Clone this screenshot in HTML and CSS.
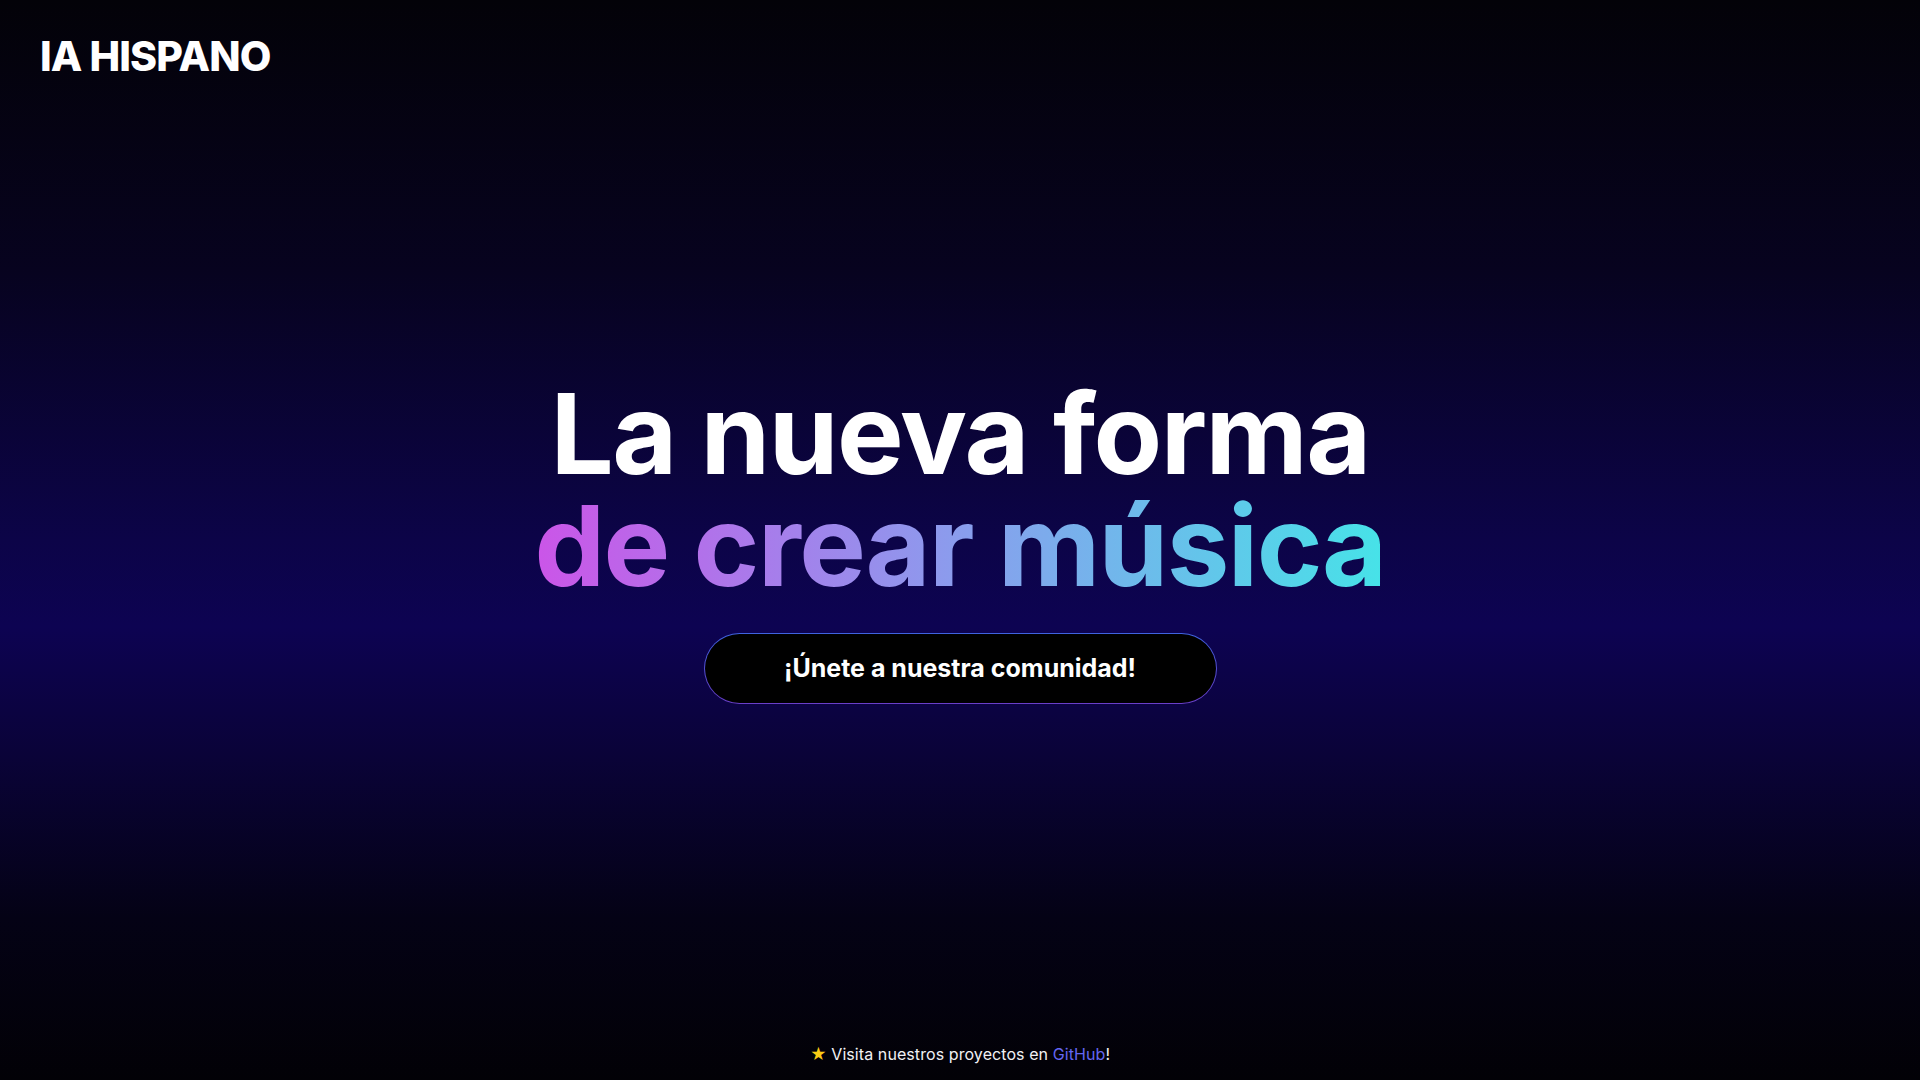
FILE: index.html
```html
<!DOCTYPE html>
<html lang="es">
<head>
<meta charset="utf-8">
<title>IA Hispano</title>
<link rel="stylesheet" href="styles.css">
</head>
<body>
<div class="page">
  <header class="topbar">
    <a class="logo" href="#">IA HISPANO</a>
  </header>
  <main class="hero">
    <h1 class="title">
      <span class="line">La nueva forma</span>
      <span class="line gradient">de crear música</span>
    </h1>
    <a class="cta" href="#"><span class="cta-inner">¡Únete a nuestra comunidad!</span></a>
  </main>
  <footer class="footer">
    <span class="star">★</span> Visita nuestros proyectos en <a class="gh" href="#">GitHub</a>!
  </footer>
</div>
</body>
</html>
```
FILE: styles.css
```css
* { box-sizing: border-box; }
html, body { margin: 0; padding: 0; height: 100%; }
body {
  font-family: "Inter", "Noto Sans", sans-serif;
  color: #fff;
  background: linear-gradient(to bottom, #030208 0%, #07031f 25%, #0c0448 50%, #0d0352 58%, #0a0338 70%, #040215 85%, #020106 100%);
}
a { text-decoration: none; color: inherit; }
.page {
  height: 100vh;
  display: grid;
  grid-template-rows: 1fr auto 1fr;
}
.topbar {
  align-self: start;
  padding: 32px 40px 0;
}
.logo {
  display: inline-block;
  font-size: 41px;
  font-weight: 800;
  letter-spacing: -0.022em;
  line-height: 1.2;
  color: #fff;
}
.hero {
  display: flex;
  flex-direction: column;
  align-items: center;
  gap: 32px;
}
.title {
  margin: 0;
  text-align: center;
  font-size: 112px;
  font-weight: 700;
  line-height: 1;
  letter-spacing: -0.014em;
}
.line { display: block; }
.gradient {
  background: linear-gradient(to right, #cb55e8 0%, #8a9ded 50%, #46e3e8 100%);
  -webkit-background-clip: text;
  background-clip: text;
  color: transparent;
}
.cta {
  display: block;
  width: 513px;
  height: 71px;
  border-radius: 999px;
  padding: 1px;
  background: linear-gradient(to bottom, #3f62e0, #6a3fc9);
}
.cta-inner {
  display: flex;
  align-items: center;
  justify-content: center;
  height: 100%;
  border-radius: 999px;
  background: #000;
  font-size: 25px;
  font-weight: 700;
  color: #fff;
}
.footer {
  align-self: end;
  text-align: center;
  font-size: 16px;
  letter-spacing: 0.005em;
  color: #f1f1f4;
  padding: 0 0 14px;
  line-height: 24px;
}
.star { color: #facc15; }
.gh { color: #6366f1; }
```
